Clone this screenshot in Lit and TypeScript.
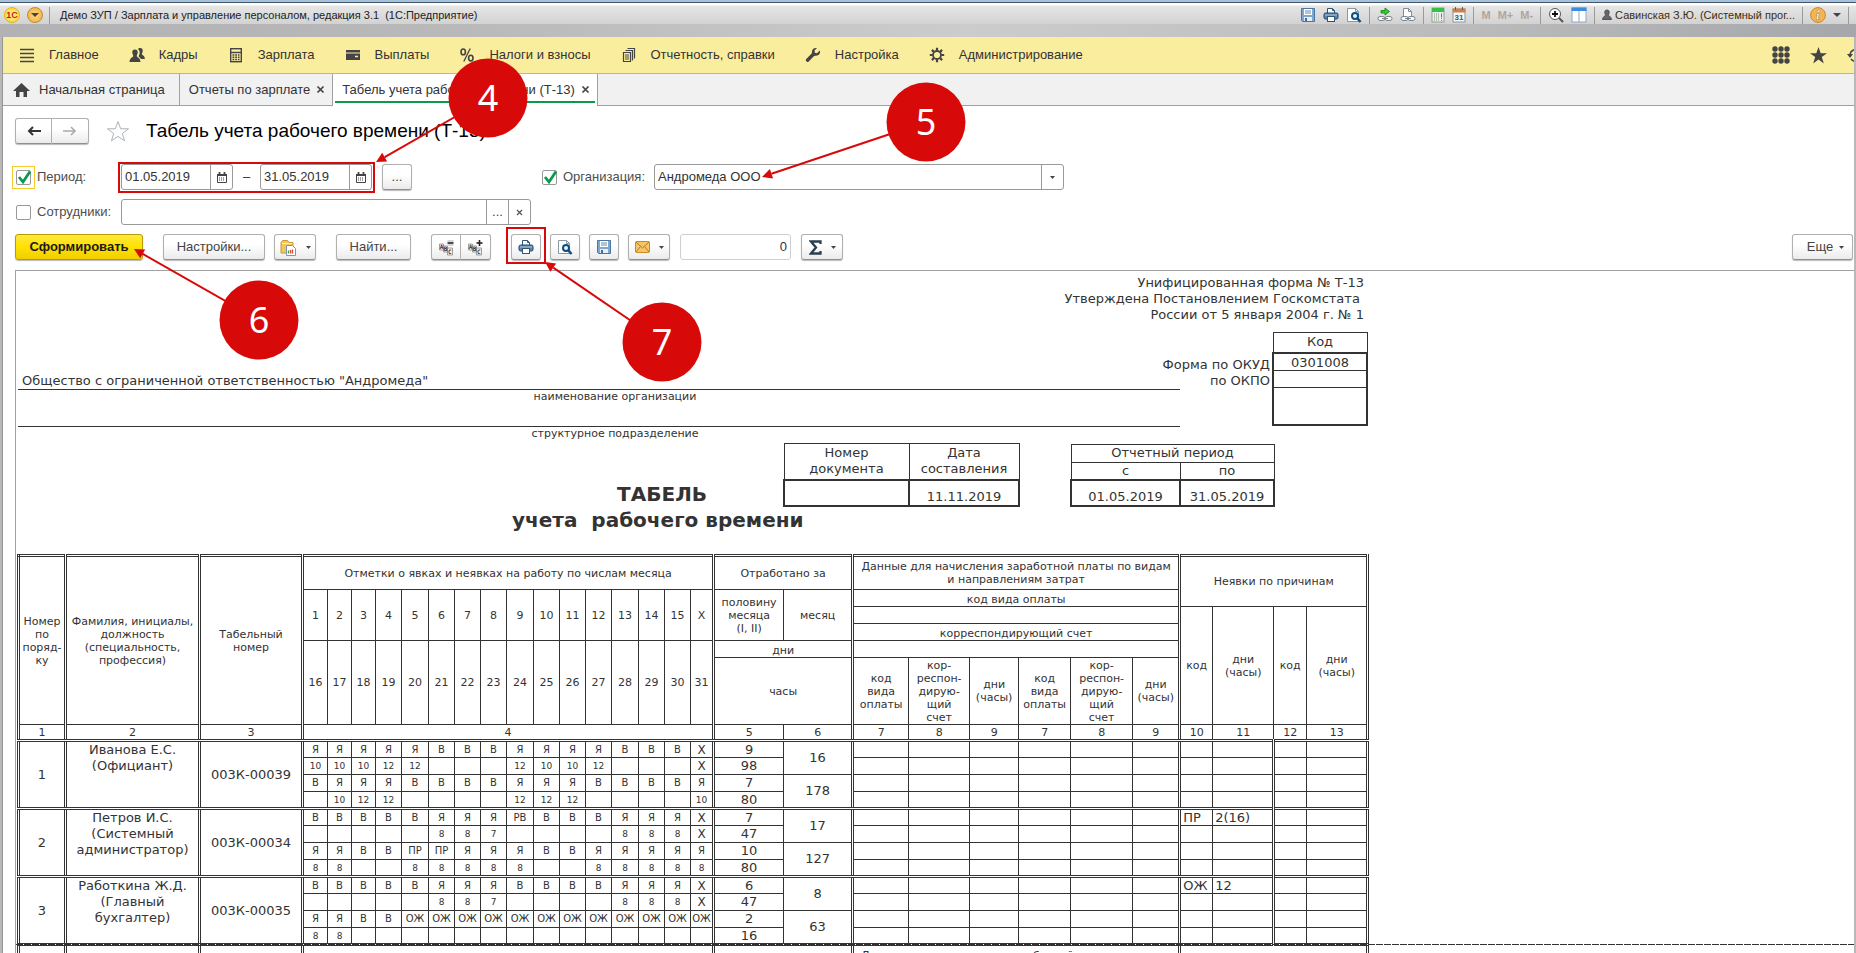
import { LitElement, html, css, svg, nothing } from "lit";
import { customElement } from "lit/decorators.js";

interface Employee {
  num: number;
  name: string[];
  code: string;
  days: string[];
  half: string[];
  month: string[];
  absence: [string, string];
}

const EMPLOYEES: Employee[] = [
  {
    num: 1,
    name: ["Иванова Е.С.", "(Официант)"],
    code: "003К-00039",
    days: [
      "Я Я Я Я Я В В В Я Я Я Я В В В X",
      "10 10 10 12 12 - - - 12 10 10 12 - - - X",
      "В Я Я Я В В В В Я Я Я В В В В Я",
      "- 10 12 12 - - - - 12 12 12 - - - - 10",
    ],
    half: ["9", "98", "7", "80"],
    month: ["16", "178"],
    absence: ["", ""],
  },
  {
    num: 2,
    name: ["Петров И.С.", "(Системный", "администратор)"],
    code: "003К-00034",
    days: [
      "В В В В В Я Я Я РВ В В В Я Я Я X",
      "- - - - - 8 8 7 - - - - 8 8 8 X",
      "Я Я В В ПР ПР Я Я Я В В Я Я Я Я Я",
      "8 8 - - 8 8 8 8 8 - - 8 8 8 8 8",
    ],
    half: ["7", "47", "10", "80"],
    month: ["17", "127"],
    absence: ["ПР", "2(16)"],
  },
  {
    num: 3,
    name: ["Работкина Ж.Д.", "(Главный", "бухгалтер)"],
    code: "003К-00035",
    days: [
      "В В В В В Я Я Я В В В В Я Я Я X",
      "- - - - - 8 8 7 - - - - 8 8 8 X",
      "Я Я В В ОЖ ОЖ ОЖ ОЖ ОЖ ОЖ ОЖ ОЖ ОЖ ОЖ ОЖ ОЖ",
      "8 8 - - - - - - - - - - - - - -",
    ],
    half: ["6", "47", "2", "16"],
    month: ["8", "63"],
    absence: ["ОЖ", "12"],
  },
];

/* Column widths, one list for each group closed by a double rule. */
const COLUMN_GROUPS = [
  [47],
  [134],
  [103],
  [25, 24, 24, 26, 27, 26, 26, 26, 27, 26, 26, 26, 27, 26, 26, 23],
  [70, 69],
  [56, 61, 49, 52, 62, 47],
  [33, 61, 33, 61],
];

const FIRST_HALF = ["1", "2", "3", "4", "5", "6", "7", "8", "9", "10", "11", "12", "13", "14", "15", "X"];
const SECOND_HALF = Array.from({ length: 16 }, (_, i) => String(i + 16));

const lines = (parts: string[]) => parts.map((p, i) => (i ? html`<br />${p}` : p));

const dayClass = (d: string) => (d === "X" ? "day cross" : /^\d/.test(d) ? "day hours" : "day");

@customElement("timesheet-table")
export class TimesheetTable extends LitElement {
  static properties = { continued: { type: Boolean } };
  declare continued: boolean;

  static styles = css`
    :host {
      display: block;
    }
    table {
      border-collapse: collapse;
      table-layout: fixed;
      width: 1352px;
      border: 3px double #333;
      font: 11px/13px "DejaVu Sans", Verdana, sans-serif;
      color: #333;
      text-align: center;
    }
    table.continued {
      border-top: none;
      border-bottom: none;
    }
    colgroup {
      border-right: 3px double #333;
    }
    tbody,
    thead {
      border-bottom: 3px double #333;
    }
    th,
    td {
      padding: 0;
      border: 1px solid #333;
      font-weight: normal;
      vertical-align: middle;
      overflow: hidden;
    }
    .continued th {
      border-top: none;
    }
    tr {
      height: 17px;
    }
    .tall {
      height: 34px;
    }
    .deep {
      height: 67px;
    }
    .numbers {
      height: 16px;
    }
    .low {
      vertical-align: bottom;
    }
    .body td {
      font-size: 13px;
      line-height: 14px;
    }
    .body .name {
      vertical-align: top;
      line-height: 16px;
    }
    .body .day {
      font-size: 10px;
      white-space: nowrap;
    }
    .body .hours {
      font-size: 9px;
    }
    .body .cross {
      font-size: 12px;
    }
    .body .left {
      text-align: left;
      padding-left: 2px;
    }
    .body .split {
      border-right: 3px double #333;
    }
  `;

  private head() {
    return html`
      <thead>
        <tr class="tall">
          <th rowspan="6">Номер<br />по<br />поряд-<br />ку</th>
          <th rowspan="6">Фамилия, инициалы,<br />должность<br />(специальность,<br />профессия)</th>
          <th rowspan="6">Табельный<br />номер</th>
          <th colspan="16">Отметки о явках и неявках на работу по числам месяца</th>
          <th colspan="2">Отработано за</th>
          <th colspan="6">Данные для начисления заработной платы по видам<br />и направлениям затрат</th>
          <th colspan="4" rowspan="2">Неявки по причинам</th>
        </tr>
        <tr>
          ${FIRST_HALF.map((d) => html`<th rowspan="3">${d}</th>`)}
          <th rowspan="3">половину<br />месяца<br />(I, II)</th>
          <th rowspan="3">месяц</th>
          <th colspan="6" class="low">код вида оплаты</th>
        </tr>
        <tr>
          <th colspan="6"></th>
          <th rowspan="4">код</th>
          <th rowspan="4">дни<br />(часы)</th>
          <th rowspan="4">код</th>
          <th rowspan="4">дни<br />(часы)</th>
        </tr>
        <tr>
          <th colspan="6" class="low">корреспондирующий счет</th>
        </tr>
        <tr>
          ${SECOND_HALF.map((d) => html`<th rowspan="2">${d}</th>`)}
          <th colspan="2" class="low">дни</th>
          <th colspan="6"></th>
        </tr>
        <tr class="deep">
          <th colspan="2">часы</th>
          ${[0, 1].map(
            () => html`
              <th>код<br />вида<br />оплаты</th>
              <th>кор-<br />респон-<br />дирую-<br />щий<br />счет</th>
              <th>дни<br />(часы)</th>
            `
          )}
        </tr>
        <tr class="numbers">
          <th>1</th>
          <th>2</th>
          <th>3</th>
          <th colspan="16">4</th>
          ${[5, 6, 7, 8, 9, 7, 8, 9, 10, 11, 12, 13].map((n) => html`<th>${n}</th>`)}
        </tr>
      </thead>
    `;
  }

  /* Top band of the heading, repeated after a page break. */
  private repeatedHead() {
    return html`
      <thead>
        <tr class="tall">
          <th></th>
          <th></th>
          <th></th>
          <th colspan="16"></th>
          <th colspan="2"></th>
          <th colspan="6">Данные для начисления заработной платы по видам<br />и направлениям затрат</th>
          <th colspan="4"></th>
        </tr>
      </thead>
    `;
  }

  private employee(e: Employee) {
    return html`
      <tbody class="body">
        ${e.days.map(
          (row, i) => html`
            <tr>
              ${i === 0
                ? html`
                    <td rowspan="4">${e.num}</td>
                    <td rowspan="4" class="name">${lines(e.name)}</td>
                    <td rowspan="4">${e.code}</td>
                  `
                : nothing}
              ${row.split(" ").map((d) => html`<td class=${dayClass(d)}>${d === "-" ? "" : d}</td>`)}
              <td>${e.half[i]}</td>
              ${i % 2 === 0 ? html`<td rowspan="2">${e.month[i / 2]}</td>` : nothing}
              ${[0, 1, 2, 3, 4, 5].map(() => html`<td></td>`)}
              <td class="left">${i === 0 ? e.absence[0] : ""}</td>
              <td class="left split">${i === 0 ? e.absence[1] : ""}</td>
              <td></td>
              <td></td>
            </tr>
          `
        )}
      </tbody>
    `;
  }

  render() {
    return html`
      <table class=${this.continued ? "continued" : ""}>
        ${COLUMN_GROUPS.map(
          (g) => html`<colgroup>${g.map((w) => html`<col style="width:${w}px" />`)}</colgroup>`
        )}
        ${this.continued ? this.repeatedHead() : html`${this.head()}${EMPLOYEES.map((e) => this.employee(e))}`}
      </table>
    `;
  }
}

/* ---------- icons ---------- */

const icon = (w: number, h: number, body: unknown) =>
  html`<svg width=${w} height=${h} viewBox="0 0 ${w} ${h}" aria-hidden="true">${body}</svg>`;

const save = icon(16, 16, svg`
  <path d="M1.5 1.5h13v13h-12l-1-1z" fill="#7fa8d0" stroke="#4a76a2"/>
  <path d="M4 2h8v6H4z" fill="#fff"/><path d="M5 4h6M5 6h6" stroke="#6f8aa5"/>
  <path d="M4 10h8v4H4z" fill="#e8eef4"/><path d="M5 11h2v3H5z" fill="#3f6d99"/>`);
const printer = icon(16, 16, svg`
  <path d="M4.5 6V1.500h5l2 2V6" fill="#fff" stroke="#2f5478"/>
  <path d="M9.500 1.500v2h2" fill="none" stroke="#2f5478"/>
  <rect x="1" y="6" width="14" height="6" rx="1.500" fill="#5f86aa" stroke="#1f466b"/>
  <path d="M2 8h12" stroke="#a9c6de"/>
  <rect x="4.500" y="9.500" width="7" height="5" fill="#fff" stroke="#2f5478"/>`);
const preview = icon(16, 16, svg`
  <path d="M1.500 1.500h8l3 3v10h-11z" fill="#fff" stroke="#8a98a6"/>
  <path d="M9.500 1.500v3h3" fill="none" stroke="#8a98a6"/>
  <circle cx="9" cy="9" r="3" fill="#e9f4fb" stroke="#0e4f80" stroke-width="2"/>
  <path d="M11 11l3.500 4" stroke="#0e4f80" stroke-width="2.600"/>`);
const linkShapes = svg`
  <rect x="1" y="9.500" width="7" height="4" rx="2" fill="#f4f6f7" stroke="#7d868d"/>
  <rect x="8" y="9.500" width="7" height="4" rx="2" fill="#f4f6f7" stroke="#7d868d"/>
  <path d="M5 11.500h6" stroke="#7d868d"/>`;
const linkGo = icon(16, 16, svg`${linkShapes}<path d="M4 3.500h4v-2.500l4.500 3.500-4.500 3.500V6H4z" fill="#2fd02f" stroke="#127c12" stroke-width=".8"/>`);
const linkPage = icon(16, 16, svg`<path d="M3.500 9V1.500h5l3 3V9" fill="#fff" stroke="#7b8e9f"/><path d="M8.500 1.500v3h3" fill="none" stroke="#7b8e9f"/>${linkShapes}`);
const calcGreen = icon(14, 16, svg`
  <rect x="1" y="1" width="12" height="14" fill="#eef0ee" stroke="#8fa08f"/>
  <rect x="1" y="1" width="12" height="4" fill="#35c04a"/>
  <path d="M3 7h6M3 9h6M3 11h6M3 13h6" stroke="#7d8a7d" stroke-dasharray="1 1"/>
  <path d="M10.500 6.500v4" stroke="#e04040"/><path d="M10.500 11v3" stroke="#888" stroke-dasharray="1 1"/>`);
const calendar31 = icon(14, 16, svg`
  <rect x="1" y="2" width="12" height="13" fill="#f5f7fa" stroke="#8b98a8"/>
  <rect x="0.500" y="1.500" width="13" height="4" fill="#c98352"/>
  <path d="M3.500 0v3M10.500 0v3" stroke="#8b4f28"/>
  <text x="7" y="13" font-size="8" font-weight="bold" text-anchor="middle" fill="#47586e" font-family="Liberation Sans, sans-serif">31</text>`);
const zoomIn = icon(16, 16, svg`
  <circle cx="7" cy="7" r="5.500" fill="#fff" stroke="#555"/><path d="M4 7h6M7 4v6" stroke="#111" stroke-width="1.800"/>
  <path d="M11 11l4 4" stroke="#555" stroke-width="2"/>`);
const panes = icon(16, 16, svg`<rect x="1" y="1" width="14" height="14" fill="#fff" stroke="#8ea8c4"/><rect x="0.500" y="0.500" width="15" height="3.500" fill="#3a8de0"/><path d="M8 4v11" stroke="#8ea8c4"/>`);
const person = icon(10, 12, svg`<path d="M5 1c3 0 2.500 3.500 1.300 5 0 1 2.700 1 3.200 4.500h-9C1 7 3.700 7 3.700 6 2.500 4.500 2 1 5 1z" fill="#666" stroke="#333" stroke-width=".7"/>`);
const info = icon(16, 18, svg`<circle cx="8" cy="9" r="7.400" fill="#f3b553" stroke="#c98826"/><circle cx="8.800" cy="5.200" r="1.300" fill="#fff" stroke="#9b7224" stroke-width=".5"/><path d="M6.300 7.700h3L8.200 12.300h1.200v1.300H6.100l1.100-4.600h-.9z" fill="#fff" stroke="#9b7224" stroke-width=".5"/>`);
const caret = (w = 5) => icon(w, 3, svg`<path d="M0 0h${w}L${w / 2} 3z" fill="#444"/>`);
const caretWide = icon(8, 4, svg`<path d="M0 0h8L4 4z" fill="#444"/>`);

const navIcons = {
  menu: icon(16, 16, svg`<path d="M1 2.500h14M1 6.500h14M1 10.500h14M1 14.500h14" stroke="#444" stroke-width="1.600"/>`),
  people: icon(16, 16, svg`<path d="M11 1c2.400 0 3 1.600 2.700 3.500-.2 1.300-.8 1.800-.8 2.600 0 1.300 2.900 1.200 3 4.900h-4c-.8-1.700-2.200-2-2.200-2.700 0-.8 1-2 1-3.800C10.700 4 10 2.800 9 2.200 9.300 1.400 10 1 11 1z" fill="#444"/><path d="M6 2.500c2.300 0 2.900 1.500 2.700 3.300C8.500 7.300 7.800 8 7.800 8.900c0 1.600 3.400 1.300 3.700 6.100H.500C.8 10.200 4.200 10.500 4.200 8.900c0-.9-.7-1.600-.9-3.100C3.100 4 3.700 2.500 6 2.500z" fill="#444"/>`),
  calc: icon(16, 16, svg`<rect x="2.700" y="1.700" width="10.600" height="13" fill="none" stroke="#444" stroke-width="1.400"/><path d="M3 5.500h10" stroke="#444" stroke-width="1.400"/><path d="M4.500 8h7M4.500 10.300h7M4.500 12.600h7" stroke="#444" stroke-width="1.500" stroke-dasharray="1.800 .9"/>`),
  wallet: icon(16, 16, svg`<path d="M1 3h14v2.500H1zM1 6.500h14V13H1z" fill="#444"/><path d="M10 9.500h3" stroke="#fbed9e" stroke-width="1.500"/>`),
  percent: icon(16, 16, svg`<ellipse cx="4.200" cy="4.900" rx="2.200" ry="2.900" fill="none" stroke="#444" stroke-width="1.600"/><ellipse cx="11.800" cy="11.100" rx="2.200" ry="2.900" fill="none" stroke="#444" stroke-width="1.600"/><path d="M11.200 1.500l-6.400 13" stroke="#444" stroke-width="1.300"/>`),
  docs: icon(16, 16, svg`<path d="M2.500 5.500h7v9h-7z" fill="none" stroke="#444" stroke-width="1.200"/><path d="M4 8h4M4 10h4M4 12h4" stroke="#444"/><path d="M4.500 3.500h7v10M6.500 1.500h7v10" fill="none" stroke="#444" stroke-width="1.200"/>`),
  wrench: icon(16, 16, svg`<path d="M14.800 3.600 12 6.200 9.800 5.700 9.500 3.600 12 1.100C9.800.3 6.700 1.800 6.900 5.300c0 .7 0 1-.5 1.500L1 12.200c-.8 1 .8 3.600 2.500 2.600l5.300-5.500c.6-.6 1-.7 1.700-.6 3.400.3 5.300-2.600 4.300-5.100z" fill="#444"/>`),
  gear: icon(16, 16, svg`<circle cx="8" cy="8" r="4" fill="none" stroke="#444" stroke-width="1.800"/><path d="M8 .8v3M8 12.200v3M.8 8h3M12.200 8h3M2.900 2.900 5 5M11 11l2.100 2.100M2.900 13.100 5 11M11 5l2.100-2.100" stroke="#444" stroke-width="2.200"/>`),
};

const NAV: [keyof typeof navIcons, string][] = [
  ["menu", "Главное"],
  ["people", "Кадры"],
  ["calc", "Зарплата"],
  ["wallet", "Выплаты"],
  ["percent", "Налоги и взносы"],
  ["docs", "Отчетность, справки"],
  ["wrench", "Настройка"],
  ["gear", "Администрирование"],
];

const cross = icon(9, 9, svg`<path d="M1.500 1.500l6 6M7.500 1.500l-6 6" stroke="#444" stroke-width="1.700"/>`);
const calendar = icon(10, 11, svg`<path d="M.5 2.500h9v8h-9z" fill="#fff" stroke="#444"/><path d="M0 3h10M2.500 0v3M7.500 0v3" stroke="#444" stroke-width="1.800"/><path d="M2 6h6M2 8h6" stroke="#444" stroke-dasharray="1 1" stroke-width="1.200"/>`);
const check = icon(15, 15, svg`<path d="M3 7l4 5 7-10.500" fill="none" stroke="#0a9a4a" stroke-width="2.800"/>`);
const abc = (plus: boolean) => icon(17, 17, svg`
  <path d="M1.500 5h4v6h-4zM5.500 7h4v6h-4zM9.500 9h5v7h-5z" fill="#f2f2f2" stroke="#888" stroke-width=".8"/>
  <g font-family="DejaVu Sans Mono, monospace" font-size="6" font-weight="bold" fill="#333"><text x="1.700" y="10">A</text><text x="5.700" y="12.300">B</text><text x="10" y="15">C</text></g>
  <path d="M9.500 4h6" stroke="#222" stroke-width="1.600"/>${plus ? svg`<path d="M12.500 1v6" stroke="#222" stroke-width="1.600"/>` : svg`<path d="M9.500 2h6M9.500 6h6" stroke="#aaa"/>`}`);
const folder = icon(17, 17, svg`
  <path d="M1 3.500 2.500 1.500h5L9 3.500h4V14H1z" fill="#f0c75e" stroke="#c79a32"/><path d="M2 4.500h10" stroke="#fdf0b8"/>
  <path d="M6.500 6.500h6l3 3v7h-9z" fill="#fff" stroke="#7a97ad"/><path d="M8.500 14.500v-3" stroke="#37a34a" stroke-width="1.300"/><path d="M10.500 14.500V11" stroke="#e04040" stroke-width="1.300"/><path d="M12.500 14.500v-4" stroke="#e04040" stroke-width="1.300"/>`);
const mail = icon(15, 12, svg`<rect x=".5" y=".5" width="14" height="11" rx="1" fill="#f5c667" stroke="#c98a25"/><path d="M1 1l6.500 6L14 1M1 11l4.500-5.500M14 11 9.500 5.500" fill="none" stroke="#b9771a"/>`);
const sigma = icon(13, 15, svg`<path d="M11.500 4V1.500H2L7 7.500 2 13.500h9.500V11" fill="none" stroke="#2c3e50" stroke-width="2.300"/>`);

@customElement("app-root")
export class AppRoot extends LitElement {
  static styles = css`
    :host {
      display: flex;
      flex-direction: column;
      height: 100vh;
      overflow: hidden;
      position: relative;
      background: #b8b8b8;
      font: 13px/16px "Liberation Sans", Arial, sans-serif;
      color: #333;
    }
    * {
      box-sizing: border-box;
    }
    svg {
      display: block;
      flex: none;
    }
    button,
    input,
    select {
      font: inherit;
      color: inherit;
      margin: 0;
      padding: 0;
    }
    button {
      display: flex;
      align-items: center;
      justify-content: center;
      border: none;
      background: none;
      white-space: nowrap;
    }

    .titlebar {
      flex: none;
      height: 37px;
      padding: 5px 0 14px 4px;
      display: flex;
      align-items: center;
      border-top: 2px solid #a5c1dc;
      background:
        linear-gradient(#44586a 0 1px, #fff 1px 3px, #e6e6e6 4px, #d2d2d2 22px, transparent 22px),
        linear-gradient(90deg, #b2b2b4, #b9b9ba 25%, #cccccc 52%, #bababb 80%, #a6a7ab);
      font-size: 11px;
      color: #222;
    }
    .logo {
      width: 16px;
      height: 16px;
      border-radius: 50%;
      background: radial-gradient(#fff68f, #f5cf2e);
      border: 1px solid #e3b41a;
      color: #d4141a;
      font-size: 9px;
      font-weight: bold;
      line-height: 14px;
      text-align: center;
    }
    .drop {
      width: 16px;
      height: 16px;
      margin: 0 6px 0 7px;
      border-radius: 50%;
      background: radial-gradient(#ffd97c, #f0a93a);
      border: 1px solid #bd8a3e;
    }
    .bar {
      flex: none;
      width: 1px;
      height: 17px;
      background: #9a9a9a;
    }
    .apptitle {
      margin: 0 auto 0 10px;
      font-size: 11px;
      font-weight: normal;
      white-space: pre;
    }
    .tools {
      display: flex;
      align-items: center;
      gap: 7px;
    }
    .tools .memory {
      color: #b3a49a;
      font-weight: bold;
    }
    .tools .user {
      gap: 3px;
      color: #3c2f10;
    }

    .window {
      flex: 1;
      min-height: 0;
      margin: 0 2px 0 2px;
      border-left: 1px solid #969696;
      background: #fff;
      display: flex;
      flex-direction: column;
    }
    .nav {
      flex: none;
      height: 37px;
      display: flex;
      align-items: center;
      gap: 30px;
      padding-left: 16px;
      background: #fbed9e;
      border-bottom: 1px solid #c9b867;
      overflow: hidden;
    }
    .nav a {
      display: flex;
      align-items: center;
      gap: 14px;
      color: #333;
      text-decoration: none;
      white-space: nowrap;
    }
    .nav .side {
      margin-left: auto;
      display: flex;
      align-items: center;
      gap: 20px;
    }
    .nav .clipped {
      width: 7px;
      overflow: hidden;
      justify-content: flex-start;
    }
    .tabs {
      flex: none;
      height: 32px;
      display: flex;
      background: #f1f1f1;
      border-bottom: 1px solid #a0a0a0;
    }
    .tab {
      display: flex;
      align-items: center;
      gap: 6px;
      padding: 0 7px 0 9px;
      border-right: 1px solid #a0a0a0;
      white-space: nowrap;
    }
    .tab.home {
      padding: 0 14px 0 10px;
      gap: 9px;
    }
    .tab.current {
      position: relative;
      background: #fff;
      margin-bottom: -1px;
      padding-bottom: 1px;
    }
    .tab.current::after {
      content: "";
      position: absolute;
      left: 2px;
      right: 2px;
      bottom: 3px;
      height: 2px;
      background: #0a9a4a;
    }

    .form {
      flex: 1;
      min-height: 0;
      display: flex;
      flex-direction: column;
      padding-left: 12px;
    }
    .heading {
      flex: none;
      display: flex;
      align-items: center;
      height: 25px;
      margin: 12px 0 20px;
    }
    .heading h1 {
      margin: 0 0 0 16px;
      font-size: 19px;
      line-height: 24px;
      font-weight: normal;
      color: #000;
    }
    .heading .star {
      margin-left: 17px;
    }
    .line {
      flex: none;
      display: flex;
      align-items: center;
      height: 28px;
    }
    .line.second {
      margin-top: 7px;
    }
    .line.commands {
      margin: 7px 0 9px;
    }
    .inset {
      padding-left: 1px;
    }

    .btn {
      flex: none;
      height: 26px;
      gap: 9px;
      border: 1px solid #b0b0b0;
      border-bottom-color: #8f8f8f;
      border-radius: 3px;
      background: linear-gradient(#fff 40%, #ebebeb);
      box-shadow: 0 1px 1px #bbb;
      color: #444;
    }
    .btn.primary {
      width: 128px;
      border-color: #b89c00;
      background: linear-gradient(#ffe83d, #ffe100 50%, #f0cf00);
      font-weight: bold;
      color: #1a1a1a;
    }
    .pair {
      display: flex;
      flex: none;
    }
    .pair .btn:first-child {
      border-radius: 3px 0 0 3px;
    }
    .pair .btn:last-child {
      border-radius: 0 3px 3px 0;
      border-left: none;
    }
    .w30 {
      width: 30px;
    }
    .w37 {
      width: 37px;
    }
    .w42 {
      width: 42px;
    }
    .w61 {
      width: 61px;
    }
    .w75 {
      width: 75px;
    }
    .w102 {
      width: 102px;
    }
    .g9 {
      margin-left: 9px;
    }
    .g10 {
      margin-left: 10px;
    }
    .g20 {
      margin-left: 20px;
    }
    .g130 {
      margin-left: 130px;
    }
    .push {
      gap: 6px;
      padding-left: 6px;
      margin: 0 1px 0 auto;
    }

    .check {
      display: grid;
      flex: none;
      width: 15px;
    }
    .check > * {
      grid-area: 1 / 1;
      pointer-events: none;
    }
    .check input {
      appearance: none;
      width: 15px;
      height: 15px;
      border: 1px solid #999;
      border-radius: 2px;
      background: #fff;
      pointer-events: auto;
    }
    .check.focus {
      outline: 1px solid #f5cb2c;
      outline-offset: 3px;
    }
    .caption {
      flex: none;
      width: 84px;
      margin-left: 6px;
      color: #4d4d4d;
    }
    .caption.wide {
      width: 91px;
    }
    .field {
      display: flex;
      flex: none;
      height: 26px;
      border: 1px solid #999;
      border-radius: 3px;
      background: #fff;
      overflow: hidden;
    }
    .field input,
    .field select {
      flex: 1;
      min-width: 0;
      border: none;
      outline: none;
      background: none;
      padding: 0 3px;
      appearance: none;
    }
    .field button,
    .field .arrow {
      flex: none;
      width: 22px;
      border-left: 1px solid #999;
      display: flex;
      align-items: center;
      justify-content: center;
      color: #444;
    }
    .field.date {
      width: 112px;
    }
    .field.long {
      width: 410px;
    }
    .field.sum {
      width: 111px;
      border-color: #cfcfcf;
    }
    .field.sum input {
      text-align: right;
    }
    .dash {
      width: 27px;
      text-align: center;
    }

    .report {
      flex: 1;
      min-height: 0;
      overflow: hidden;
      border: 1px solid #a0a0a0;
      border-width: 1px 0 0 1px;
      padding-left: 1px;
      font: 13px/16px "DejaVu Sans", Verdana, sans-serif;
      color: #333;
    }
    .sheet {
      width: 1352px;
    }
    .approval {
      margin: 0;
      padding: 4px 5px 9px 0;
      text-align: right;
      white-space: pre;
    }
    .org {
      display: flex;
      align-items: flex-start;
      height: 110px;
    }
    .org .names {
      flex: none;
      width: 1163px;
      padding: 41px 0 0 1px;
    }
    .org .value {
      border-bottom: 1px solid #333;
      height: 17px;
      padding-left: 4px;
    }
    .org .value.empty {
      height: 23px;
    }
    .org .hint {
      font-size: 11px;
      line-height: 14px;
      padding-left: 32px;
      text-align: center;
    }
    .org .labels {
      flex: none;
      width: 92px;
      margin-left: -2px;
      padding-top: 25px;
      text-align: right;
      white-space: nowrap;
      direction: rtl;
    }
    .docs {
      display: flex;
      align-items: flex-end;
      height: 65px;
    }
    .docs h2 {
      flex: none;
      width: 766px;
      padding-right: 76px;
      text-align: right;
    }
    h2 {
      margin: 0;
      font-size: 20px;
      line-height: 26px;
      white-space: pre;
    }
    .subtitle {
      padding: 0 0 21px 495px;
    }
    .mini {
      border-collapse: collapse;
      table-layout: fixed;
      text-align: center;
    }
    .mini th,
    .mini td {
      padding: 0;
      font-weight: normal;
      border: 1px solid #333;
    }
    .mini .filled {
      border: 2px solid #333;
    }
    .mini td {
      vertical-align: bottom;
      height: 26px;
    }
    .number {
      width: 237px;
    }
    .number th {
      line-height: 16px;
      height: 37px;
    }
    .period {
      width: 205px;
      margin-left: 50px;
    }
    .period th {
      height: 18px;
    }
    .code {
      width: 96px;
      margin-left: 2px;
    }
    .code th {
      height: 20px;
    }
    .code td {
      height: 17px;
      line-height: 15px;
      border-left-width: 2px;
      border-right-width: 2px;
    }
    .code td.top {
      height: 18px;
      border-top-width: 2px;
    }
    .code td.last {
      height: 37px;
      border-bottom-width: 2px;
    }
    .break {
      height: 1px;
      margin: -2px 0 1px -1px;
      background: repeating-linear-gradient(90deg, #333 0 7px, #fff 7px 8px);
    }

    .notes {
      position: absolute;
      left: 0;
      top: 0;
      pointer-events: none;
    }
    .notes text {
      font: 36px "Noto Sans", "Open Sans", sans-serif;
      fill: #fff;
      text-anchor: middle;
    }
  `;

  private note(n: number, cx: number, cy: number, tx: number, ty: number) {
    const len = Math.hypot(cx - tx, cy - ty);
    const ux = (cx - tx) / len;
    const uy = (cy - ty) / len;
    const bx = tx + ux * 10;
    const by = ty + uy * 10;
    return svg`
      <line x1=${cx} y1=${cy} x2=${bx} y2=${by} stroke="#d80909" stroke-width="2" />
      <path d="M${tx} ${ty}L${bx - uy * 5} ${by + ux * 5}L${bx + uy * 5} ${by - ux * 5}z" fill="#d80909" />
      <circle cx=${cx} cy=${cy} r="39.500" fill="#d80909" />
      <text x=${cx} y=${cy + 13}>${n}</text>
    `;
  }

  render() {
    return html`
      <header class="titlebar">
        <span class="logo">1С</span>
        <button class="drop" aria-label="Меню">${caretWide}</button>
        <span class="bar"></span>
        <h1 class="apptitle">Демо ЗУП / Зарплата и управление персоналом, редакция 3.1  (1С:Предприятие)</h1>
        <div class="tools">
          <button aria-label="Сохранить">${save}</button>
          <button aria-label="Печать">${printer}</button>
          <button aria-label="Просмотр">${preview}</button>
          <span class="bar"></span>
          <button aria-label="Перейти по ссылке">${linkGo}</button>
          <button aria-label="Получить ссылку">${linkPage}</button>
          <span class="bar"></span>
          <button aria-label="Калькулятор">${calcGreen}</button>
          <button aria-label="Календарь">${calendar31}</button>
          <span class="bar"></span>
          <button class="memory">M</button>
          <button class="memory">M+</button>
          <button class="memory">M-</button>
          <span class="bar"></span>
          <button aria-label="Масштаб">${zoomIn}</button>
          <button aria-label="Панели">${panes}</button>
          <span class="bar"></span>
          <button class="user">${person}Савинская З.Ю. (Системный прог...</button>
          <span class="bar"></span>
          <button aria-label="О программе">${info}</button>
          <button aria-label="Ещё">${caretWide}</button>
          <span class="bar"></span>
          <span></span>
        </div>
      </header>
      <div class="window">
        <nav class="nav">
          ${NAV.map(([k, t]) => html`<a href="#">${navIcons[k]}${t}</a>`)}
          <div class="side">
            <button aria-label="Функции">
              ${icon(18, 18, svg`${[3, 9, 15].map((y) => [3, 9, 15].map((x) => svg`<circle cx=${x} cy=${y} r="2.700" fill="#444"/>`))}`)}
            </button>
            <button aria-label="Избранное">
              ${icon(17, 17, svg`<path d="M8.500 0l2.200 6.200H17l-5.200 3.900 2 6.400-5.300-3.900-5.300 3.900 2-6.400L0 6.200h6.300z" fill="#444"/>`)}
            </button>
            <button class="clipped" aria-label="История">
              ${icon(16, 16, svg`<path d="M3 7a6 6 0 1 1 1 5" fill="none" stroke="#444" stroke-width="1.500"/><path d="M0 7h6L3 11z" fill="#444"/>`)}
            </button>
          </div>
        </nav>
        <div class="tabs">
          <div class="tab home">
            ${icon(17, 14, svg`<path d="M8.500 0 17 8h-3v6h-3.500V9h-4v5H3V8H0z" fill="#444"/>`)}Начальная страница
          </div>
          <div class="tab">Отчеты по зарплате <button aria-label="Закрыть">${cross}</button></div>
          <div class="tab current">
            Табель учета рабочего времени (Т-13) <button aria-label="Закрыть">${cross}</button>
          </div>
        </div>
        <main class="form">
          <div class="heading">
            <div class="pair">
              <button class="btn w37" aria-label="Назад">
                ${icon(14, 10, svg`<path d="M14 5H3M6 1 2 5l4 4" fill="none" stroke="#333" stroke-width="2"/>`)}
              </button>
              <button class="btn w37" aria-label="Вперед">
                ${icon(14, 10, svg`<path d="M0 5h12M8 1l4 4-4 4" fill="none" stroke="#aaa" stroke-width="1.600"/>`)}
              </button>
            </div>
            <button class="star" aria-label="В избранное">
              ${icon(24, 22, svg`<path d="M12 1.500l2.700 7.300h7.800l-6.200 4.800 2.300 7.200L12 16.400l-6.600 4.400 2.300-7.200L1.500 8.800h7.800z" fill="#fff" stroke="#aab2bb"/>`)}
            </button>
            <h1>Табель учета рабочего времени (Т-13)</h1>
          </div>
          <div class="line inset">
            <span class="check focus"><input id="period" type="checkbox" checked />${check}</span>
            <label class="caption" for="period">Период:</label>
            <div class="field date">
              <input aria-label="Начало периода" .value=${"01.05.2019"} /><button aria-label="Выбрать дату">${calendar}</button>
            </div>
            <span class="dash">–</span>
            <div class="field date">
              <input aria-label="Конец периода" .value=${"31.05.2019"} /><button aria-label="Выбрать дату">${calendar}</button>
            </div>
            <button class="btn w30 g10">...</button>
            <span class="check g130"><input id="org" type="checkbox" checked />${check}</span>
            <label class="caption wide" for="org">Организация:</label>
            <div class="field long">
              <select aria-label="Организация"><option>Андромеда ООО</option></select>
              <span class="arrow">${caret()}</span>
            </div>
          </div>
          <div class="line second inset">
            <span class="check"><input id="staff" type="checkbox" /></span>
            <label class="caption" for="staff">Сотрудники:</label>
            <div class="field long">
              <input aria-label="Сотрудники" />
              <button>...</button>
              <button aria-label="Очистить">
                ${icon(7, 7, svg`<path d="M1 1l5 5M6 1 1 6" stroke="#555" stroke-width="1.200"/>`)}
              </button>
            </div>
          </div>
          <div class="line commands">
            <button class="btn primary">Сформировать</button>
            <button class="btn w102 g20">Настройки...</button>
            <button class="btn w42 g9" aria-label="Варианты">${folder}${caret()}</button>
            <button class="btn w75 g20">Найти...</button>
            <div class="pair g20">
              <button class="btn w30" aria-label="Свернуть">${abc(false)}</button>
              <button class="btn w30" aria-label="Развернуть">${abc(true)}</button>
            </div>
            <button class="btn w30 g20" aria-label="Печать">${printer}</button>
            <button class="btn w30 g9" aria-label="Просмотр">${preview}</button>
            <button class="btn w30 g9" aria-label="Сохранить">${save}</button>
            <button class="btn w42 g9" aria-label="Отправить">${mail}${caret()}</button>
            <div class="field sum g10"><input aria-label="Сумма" .value=${"0"} /></div>
            <button class="btn w42 g10" aria-label="Итог">${sigma}${caret()}</button>
            <button class="btn w61 push">Еще ${caret()}</button>
          </div>
          <section class="report">
            <div class="sheet">
              <p class="approval">Унифицированная форма № Т-13
Утверждена Постановлением Госкомстата${"\u00a0"}
России от 5 января 2004 г. № 1</p>
              <div class="org">
                <div class="names">
                  <div class="value">Общество с ограниченной ответственностью "Андромеда"</div>
                  <div class="hint">наименование организации</div>
                  <div class="value empty"></div>
                  <div class="hint">структурное подразделение</div>
                </div>
                <div class="labels">Форма по ОКУД<br />по ОКПО</div>
                <table class="mini code">
                  <tr><th>Код</th></tr>
                  <tr><td class="top">0301008</td></tr>
                  <tr><td></td></tr>
                  <tr><td class="last"></td></tr>
                </table>
              </div>
              <div class="docs">
                <h2>ТАБЕЛЬ</h2>
                <table class="mini number">
                  <colgroup><col style="width:125px" /><col style="width:110px" /></colgroup>
                  <tr><th>Номер<br />документа</th><th>Дата<br />составления</th></tr>
                  <tr><td class="filled"></td><td class="filled">11.11.2019</td></tr>
                </table>
                <table class="mini period">
                  <colgroup><col style="width:109px" /><col style="width:94px" /></colgroup>
                  <tr><th colspan="2">Отчетный период</th></tr>
                  <tr><th>с</th><th>по</th></tr>
                  <tr><td class="filled">01.05.2019</td><td class="filled">31.05.2019</td></tr>
                </table>
              </div>
              <h2 class="subtitle">учета  рабочего времени</h2>
              <timesheet-table></timesheet-table>
            </div>
            <div class="break"></div>
            <div class="sheet"><timesheet-table continued></timesheet-table></div>
          </section>
        </main>
      </div>
      <svg class="notes" width="1100" height="400" viewBox="0 0 1100 400">
        <g fill="none" stroke="#d80909" stroke-width="2">
          <rect x="119" y="163" width="255" height="29" />
          <rect x="507" y="228" width="38" height="35" />
        </g>
        ${this.note(4, 488, 98, 376, 162)} ${this.note(5, 926, 122, 762, 177)}
        ${this.note(6, 259, 320, 134, 249)} ${this.note(7, 662, 342, 545, 262)}
      </svg>
    `;
  }
}
